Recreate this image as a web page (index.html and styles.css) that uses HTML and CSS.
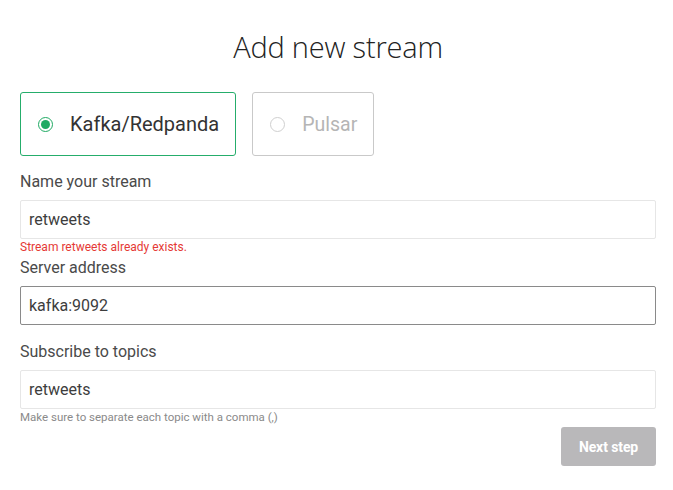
FILE: index.html
```html
<!DOCTYPE html>
<html>
<head>
<meta charset="utf-8">
<link rel="stylesheet" href="styles.css">
</head>
<body>
<div class="page">
  <h1 class="title">Add new stream</h1>
  <div class="options">
    <div class="option selected">
      <span class="radio on"></span>
      <span class="opt-label">Kafka/Redpanda</span>
    </div>
    <div class="option">
      <span class="radio"></span>
      <span class="opt-label muted">Pulsar</span>
    </div>
  </div>
  <div class="field field-name">
    <label class="label">Name your stream</label>
    <div class="input">retweets</div>
    <div class="error">Stream retweets already exists.</div>
  </div>
  <div class="field field-server">
    <label class="label">Server address</label>
    <div class="input focused">kafka:9092</div>
  </div>
  <div class="field field-topics">
    <label class="label">Subscribe to topics</label>
    <div class="input">retweets</div>
    <div class="hint">Make sure to separate each topic with a comma (,)</div>
  </div>
  <div class="actions">
    <button class="btn">Next step</button>
  </div>
</div>
</body>
</html>
```
FILE: styles.css
```css
html, body {
  margin: 0;
  padding: 0;
  background: #ffffff;
}
body {
  font-family: Roboto, "Liberation Sans", sans-serif;
  color: #3a3a3a;
}
.page {
  padding: 0 17px 0 20px;
  display: flex;
  flex-direction: column;
}
.title {
  margin: 26px 0 0 0;
  text-align: center;
  font-family: "Open Sans", sans-serif;
  font-weight: 300;
  font-size: 29px;
  line-height: 42px;
  color: #222;
  letter-spacing: -0.2px;
}
.options {
  display: flex;
  gap: 16px;
  margin-top: 24px;
}
.option {
  box-sizing: border-box;
  height: 64px;
  border: 1px solid #c9c9c9;
  border-radius: 3px;
  display: flex;
  align-items: center;
  padding: 0 16px 0 17px;
  gap: 17px;
}
.option.selected {
  border-color: #25ad6b;
}
.radio {
  box-sizing: border-box;
  width: 15px;
  height: 15px;
  border-radius: 50%;
  border: 1px solid #cfcfcf;
  display: flex;
  align-items: center;
  justify-content: center;
}
.radio.on {
  border-color: #1faa63;
}
.radio.on::after {
  content: "";
  width: 9px;
  height: 9px;
  border-radius: 50%;
  background: #1faa63;
}
.opt-label {
  font-size: 20px;
  color: #333;
}
.opt-label.muted {
  color: #b5b5b5;
  font-size: 19.5px;
}
.field {
  display: flex;
  flex-direction: column;
}
.label {
  font-size: 16px;
  line-height: 18px;
  color: #4a4a4a;
  margin-bottom: 9px;
}
.field-name .label {
  margin-top: 17px;
}
.field-server .label {
  margin-top: 5px;
}
.field-topics .label {
  margin-top: 18px;
}
.input {
  box-sizing: border-box;
  height: 39px;
  border: 1px solid #e6e6e6;
  border-radius: 2px;
  padding: 0 8px;
  display: flex;
  align-items: center;
  font-size: 16px;
  color: #3d3d3d;
}
.input.focused {
  border-color: #8a8a8a;
}
.error {
  font-size: 12px;
  line-height: 14px;
  margin-top: 1px;
  color: #e53935;
}
.hint {
  font-size: 11.5px;
  line-height: 14px;
  margin-top: 1px;
  color: #8a8a8a;
}
.actions {
  display: flex;
  justify-content: flex-end;
  margin-top: 3px;
}
.btn {
  width: 95px;
  height: 39px;
  border: none;
  border-radius: 3px;
  background: #b9b8ba;
  color: #fff;
  font-family: Roboto, "Liberation Sans", sans-serif;
  font-weight: 700;
  font-size: 14px;
  letter-spacing: -0.1px;
}
```
